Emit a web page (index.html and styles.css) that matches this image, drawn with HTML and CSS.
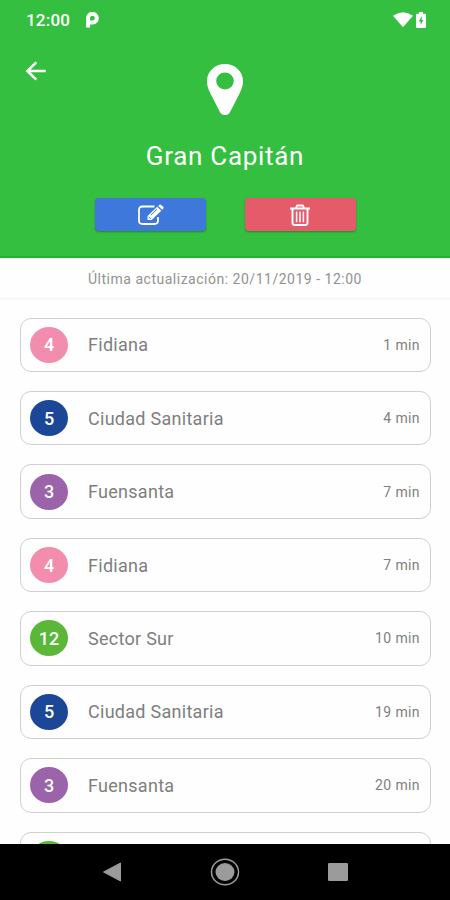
FILE: index.html
```html
<!DOCTYPE html>
<html lang="es">
<head>
<meta charset="utf-8">
<title>Gran Capitán</title>
<link rel="stylesheet" href="styles.css">
</head>
<body>
<div class="screen">
  <header class="header">
    <div class="status">
      <span class="clock">12:00</span>
      <svg class="app-mark" width="13" height="16" viewBox="0 0 13 16"><path fill="none" stroke="#fff" stroke-width="4" d="M2.1 15.5V7A4.4 4.4 0 1 1 6.5 10.6H4"/></svg>
      <svg class="wifi" width="20" height="16" viewBox="0 0 20 16"><path fill="#fff" d="M0 3.8Q10-3.2 20 3.8L10 15.2Z"/></svg>
      <svg class="battery" width="10" height="16" viewBox="0 0 10 16"><path fill="#fff" d="M3 0h4v1.8h2q1 0 1 1V15q0 1-1 1H1q-1 0-1-1V2.8q0-1 1-1h2Z"/><path fill="#35bf40" d="M5.7 4 2.8 9.5h1.8V13l2.8-5H5.7Z"/></svg>
    </div>
    <div class="hero">
      <svg class="back" width="22" height="20" viewBox="0 0 22 20"><path fill="none" stroke="#fff" stroke-width="2.500" d="M20.700 10H2.500M11.300 1.300 2.300 10l9 8.700"/></svg>
      <svg class="pin" width="36" height="51" viewBox="0 0 36 51"><path fill="#fff" fill-rule="evenodd" d="M18 0C8 0 0 7.500 0 17c0 6 2.300 10 4.200 14l9 17.500c2 3.400 7.600 3.400 9.600 0l9-17.500C33.700 27 36 23 36 17 36 7.500 28 0 18 0Zm0 8.500a8.800 8.500 0 1 1 0 17 8.800 8.500 0 0 1 0-17Z"/></svg>
    </div>
    <h1 class="title">Gran Capitán</h1>
    <div class="actions">
      <button class="btn edit" aria-label="Editar"><svg width="27" height="22" viewBox="0 0 27 22"><g fill="none" stroke="#fff" stroke-width="1.800" stroke-linejoin="round"><path d="M17.500 2.500H5.500Q2 2.500 2 6v10.500Q2 20 5.500 20h12Q21 20 21 16.500V13"/></g><path fill="#fff" d="m10.500 12 9.700-9.200 4.100 3.900-9.700 9.200h-4.100ZM21.200 1.900l1-1q1-.8 2 0l2 1.900q.9 1 0 1.900l-1 1Z"/><path fill="none" stroke="#3e78db" stroke-width="1" d="m14 11 6-5.800M11.600 12.800l2.200 2"/></svg></button>
      <button class="btn delete" aria-label="Eliminar"><svg width="20" height="22" viewBox="0 0 20 22"><path fill="none" stroke="#fff" stroke-width="1.900" stroke-linejoin="round" d="M0 4.500h20M6 4.200 7 1.500h6l1 2.700M2.500 4.500v14Q2.500 21 4.500 21h11q2 0 2-2.500v-14"/><path stroke="#fff" stroke-width="1.500" d="M6.600 7.500v10.700M10 7.500v10.700M13.400 7.500v10.700"/></svg></button>
    </div>
  </header>
  <p class="updated"><span>Última actualización: 20/11/2019 - 12:00</span></p>
  <main class="list">
    <div class="card"><span class="line pink">4</span><span class="name">Fidiana</span><span class="time">1 min</span></div>
    <div class="card"><span class="line blue">5</span><span class="name">Ciudad Sanitaria</span><span class="time">4 min</span></div>
    <div class="card"><span class="line purple">3</span><span class="name">Fuensanta</span><span class="time">7 min</span></div>
    <div class="card"><span class="line pink">4</span><span class="name">Fidiana</span><span class="time">7 min</span></div>
    <div class="card"><span class="line green">12</span><span class="name">Sector Sur</span><span class="time">10 min</span></div>
    <div class="card"><span class="line blue">5</span><span class="name">Ciudad Sanitaria</span><span class="time">19 min</span></div>
    <div class="card"><span class="line purple">3</span><span class="name">Fuensanta</span><span class="time">20 min</span></div>
    <div class="card"><span class="line green"></span></div>
  </main>
  <nav class="navbar">
    <svg width="20" height="20" viewBox="0 0 20 20"><path fill="#9b9b9b" stroke="#9b9b9b" stroke-linejoin="round" d="M18.500 1v18L1.500 10Z"/></svg>
    <svg width="30" height="28" viewBox="0 0 30 28"><ellipse cx="15" cy="14" rx="13.500" ry="12.800" fill="none" stroke="#9b9b9b" stroke-width="1.500"/><ellipse cx="15" cy="14" rx="9.500" ry="9" fill="#9b9b9b"/></svg>
    <svg width="20" height="20" viewBox="0 0 20 20"><rect y="1" width="20" height="18" rx="1.200" fill="#9b9b9b"/></svg>
  </nav>
</div>
</body>
</html>
```
FILE: styles.css
```css
* { box-sizing: border-box; }
body { margin: 0; font-family: Roboto, "Liberation Sans", sans-serif; }
.screen { width: 450px; height: 900px; display: flex; flex-direction: column; overflow: hidden; background: #fefefe; }

.header { height: 258px; flex: none; background: #35bf40; border-bottom: 2px solid #20b32f; color: #fff; }
.status { height: 38px; display: flex; align-items: center; padding: 1px 24px 0 26px; }
.clock { width: 60px; font-size: 17px; font-weight: 500; letter-spacing: 0.2px; }
.wifi { margin-left: auto; }
.battery { margin-left: 3px; }
.hero { height: 78px; display: grid; grid-template-columns: 1fr 36px 1fr; padding: 22px 25px 0; }
.back { margin-top: 1px; }
.pin { margin-top: 4px; }
.title { margin: 24px 0 0; height: 32px; line-height: 32px; font-size: 26px; font-weight: 400; text-align: center; letter-spacing: 0.7px; }
.actions { display: flex; justify-content: center; gap: 39px; margin-top: 26px; }
.btn { width: 111px; height: 33px; padding: 0; border: 0; border-radius: 4px; display: flex; align-items: center; justify-content: center; box-shadow: 0 1px 2px rgba(0, 0, 0, 0.3); }
.edit { background: #3e78db; }
.delete { background: #e65b69; }

.updated { flex: none; height: 42px; margin: 0; border-bottom: 3px solid #f8f8f8; font-size: 14px; line-height: 42px; text-align: center; color: #929292; letter-spacing: 0.51px; }
.list { flex: 1; min-height: 0; overflow: hidden; display: flex; flex-direction: column; gap: 19px; padding: 17.500px 19px 0 20px; }
.card { flex: none; height: 54.450px; display: flex; align-items: center; border: 1.500px solid #d0d0cf; border-radius: 11px; padding: 0 10px 0 9px; color: #7e7e7e; }
.line { width: 38px; height: 36px; border-radius: 50%; display: flex; align-items: center; justify-content: center; color: #fff; font-size: 18px; font-weight: 500; }
.pink { background: #f28dae; }
.blue { background: #1c4696; }
.purple { background: #9b63aa; }
.green { background: #5bb738; }
.name { margin-left: 20px; font-size: 18px; letter-spacing: 0.28px; }
.time { margin-left: auto; font-size: 14px; letter-spacing: 0.4px; }

.navbar { flex: none; height: 56px; background: #000; display: flex; align-items: center; justify-content: center; gap: 88px; }
```
